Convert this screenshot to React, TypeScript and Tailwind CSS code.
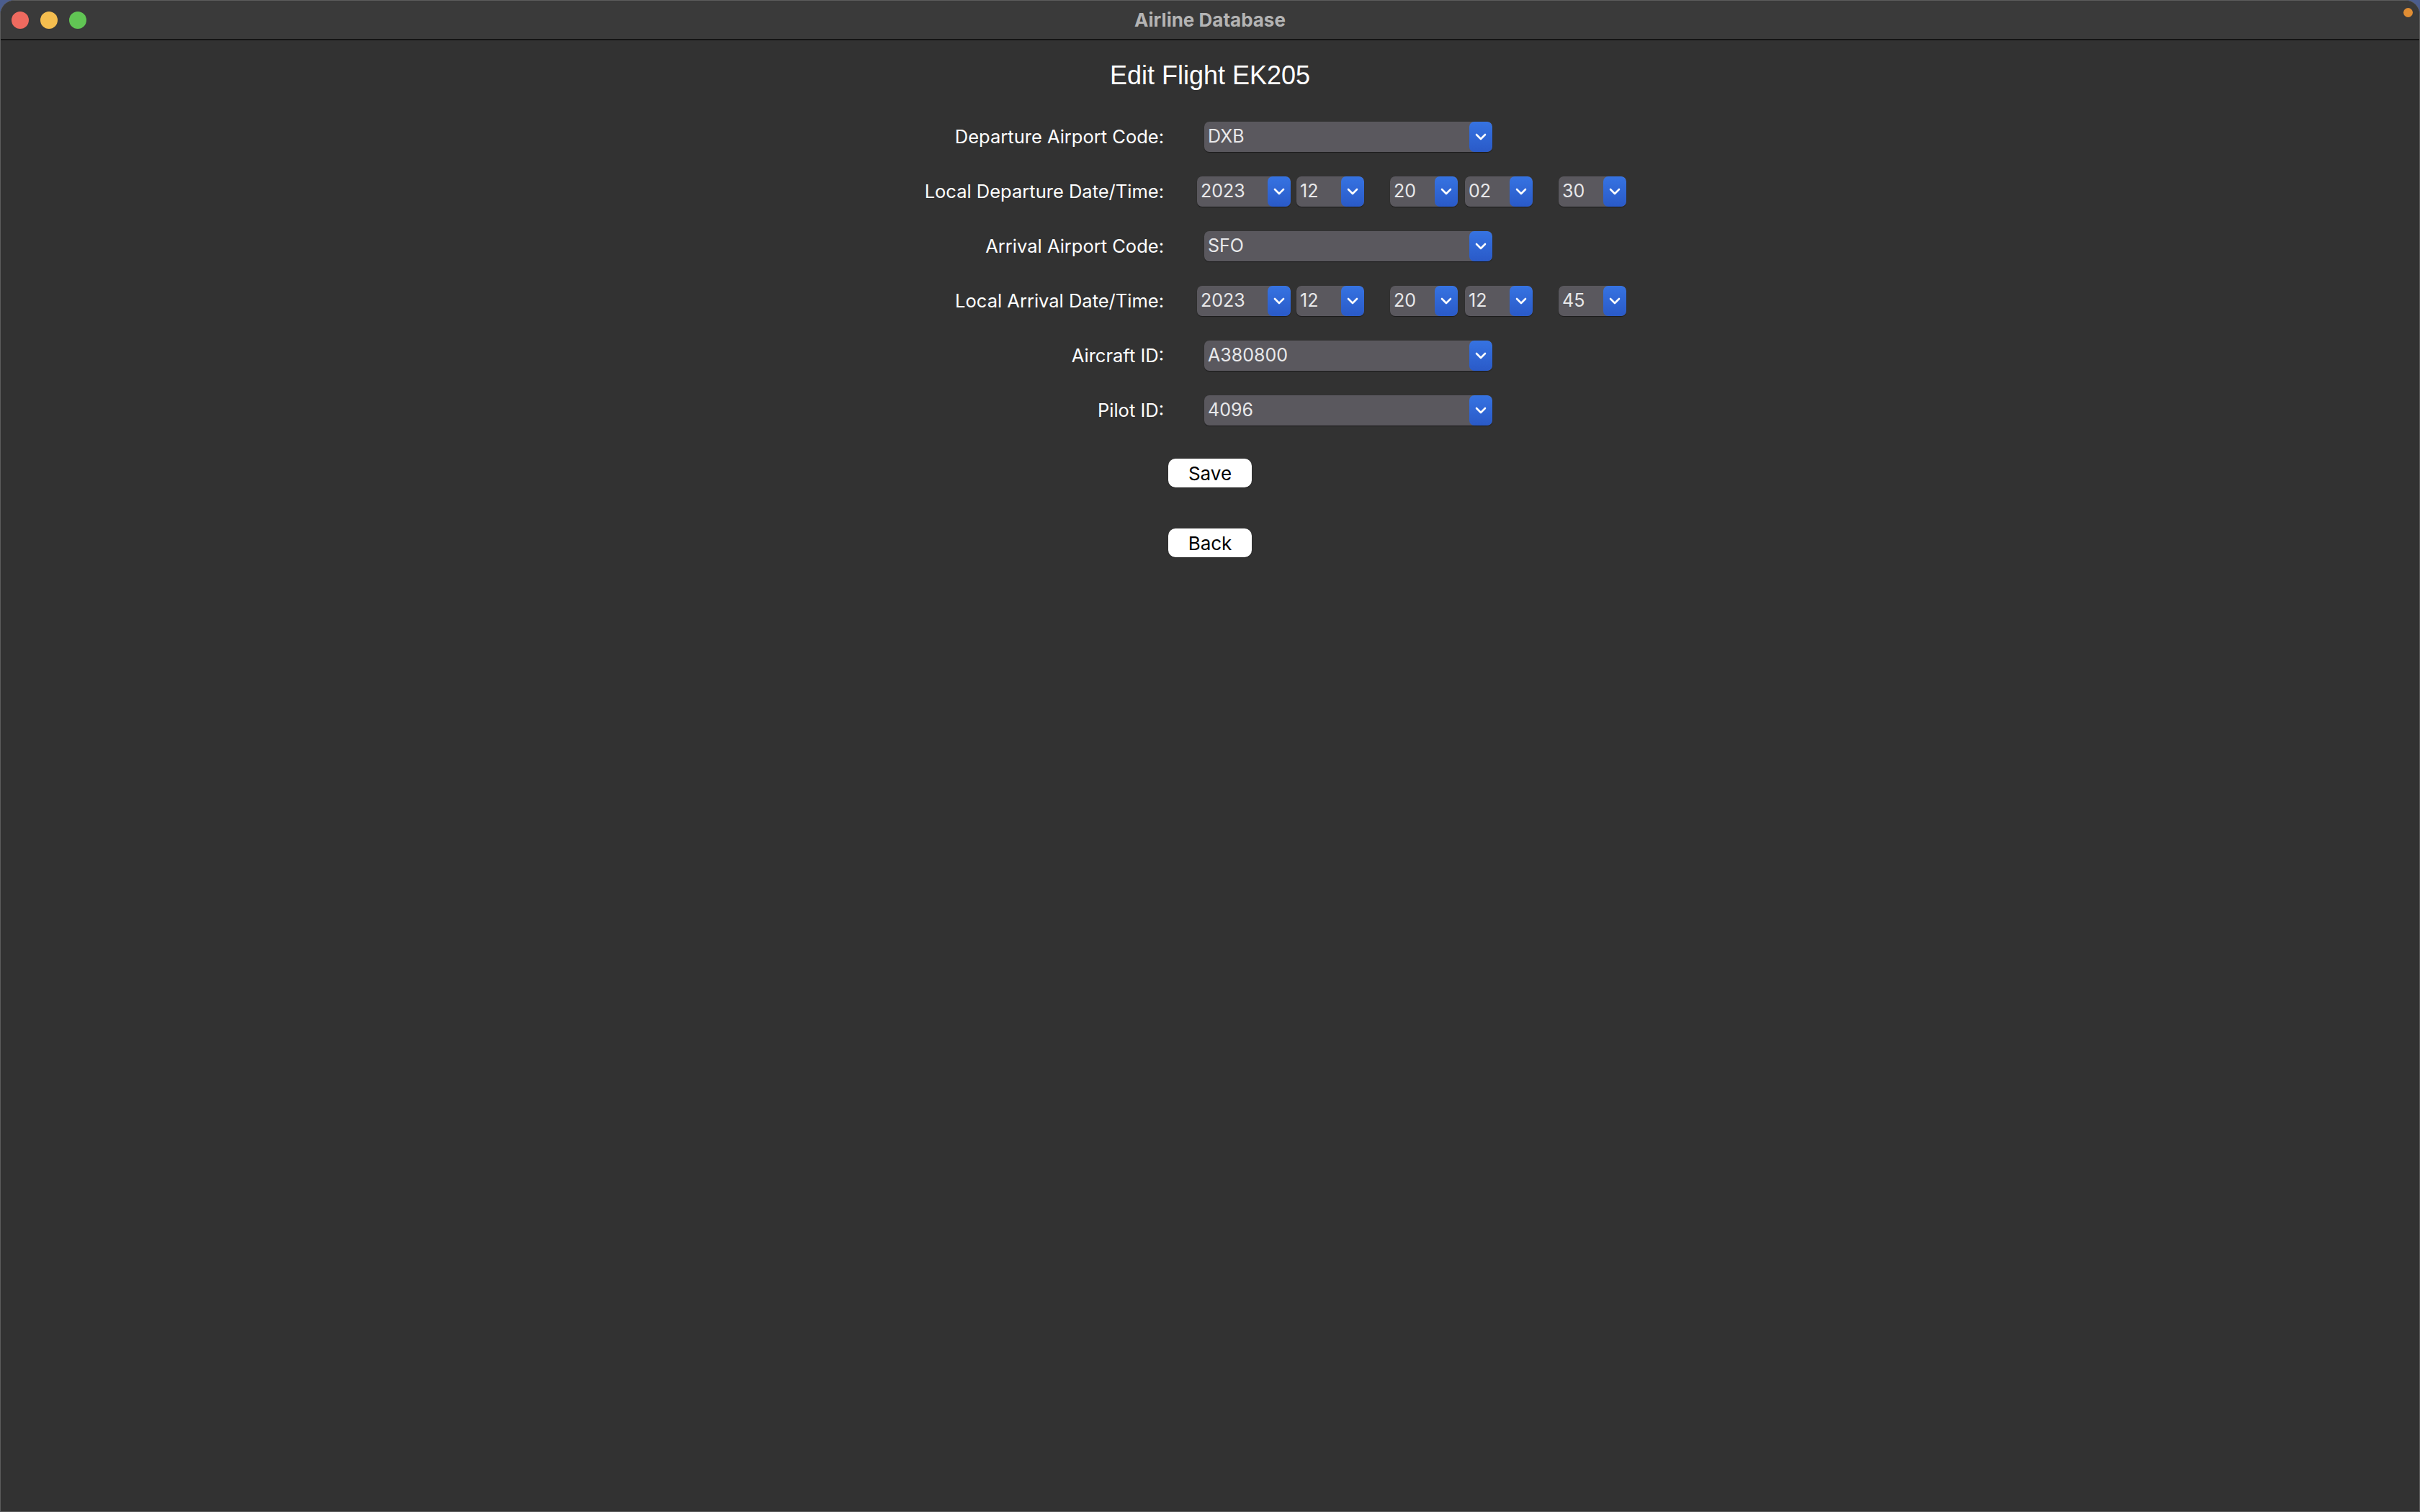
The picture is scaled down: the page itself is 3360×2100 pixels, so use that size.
import React, { useState } from "react"

type SelectProps = {
  value: string
  width: string
}

const Chevron = () => (
  <svg width="16" height="10" viewBox="0 0 16 10" fill="none">
    <polyline points="2,2 8,8 14,2" stroke="white" strokeWidth="2.6" strokeLinecap="round" strokeLinejoin="round" />
  </svg>
)

const PopupSelect = ({ value, width }: SelectProps) => {
  return (
    <div
      className={`${width} flex h-[42px] shrink-0 items-stretch overflow-hidden rounded-[7px] bg-[#5a585e] shadow-[0_1px_1px_rgba(0,0,0,0.45)]`}
    >
      <div className="flex flex-1 items-center pl-[5px] text-[25px] text-[#e8e8ea]">{value}</div>
      <div className="flex w-[32px] items-center justify-center rounded-[7px] bg-gradient-to-b from-[#3673e2] to-[#2a5ac8]">
        <Chevron />
      </div>
    </div>
  )
}

const DateTimeRow = ({ parts }: { parts: string[] }) => {
  return (
    <div className="ml-[46px] flex items-center">
      <PopupSelect value={parts[0]} width="w-[130px]" />
      <div className="ml-[8px]">
        <PopupSelect value={parts[1]} width="w-[94px]" />
      </div>
      <div className="ml-[36px]">
        <PopupSelect value={parts[2]} width="w-[94px]" />
      </div>
      <div className="ml-[10px]">
        <PopupSelect value={parts[3]} width="w-[94px]" />
      </div>
      <div className="ml-[36px]">
        <PopupSelect value={parts[4]} width="w-[94px]" />
      </div>
    </div>
  )
}

const Row = ({ label, children }: { label: string; children: React.ReactNode }) => (
  <div className="flex h-[42px] items-center">
    <div className="w-[516px] shrink-0 text-right text-[25.5px] text-white">{label}</div>
    {children}
  </div>
)

const EditFlight = () => {
  const [flight] = useState({
    code: "EK205",
    departure: "DXB",
    departureTime: ["2023", "12", "20", "02", "30"],
    arrival: "SFO",
    arrivalTime: ["2023", "12", "20", "12", "45"],
    aircraft: "A380800",
    pilot: "4096",
  })

  return (
    <div className="flex flex-col items-center pt-[29px]">
      <h1 className="text-[36px] leading-[40px] text-white [font-family:'Liberation_Sans',Arial,sans-serif]">
        Edit Flight {flight.code}
      </h1>
      <div className="mt-[44px] flex w-[1160px] flex-col gap-y-[34px]">
        <Row label="Departure Airport Code:">
          <div className="ml-[56px]">
            <PopupSelect value={flight.departure} width="w-[400px]" />
          </div>
        </Row>
        <Row label="Local Departure Date/Time:">
          <DateTimeRow parts={flight.departureTime} />
        </Row>
        <Row label="Arrival Airport Code:">
          <div className="ml-[56px]">
            <PopupSelect value={flight.arrival} width="w-[400px]" />
          </div>
        </Row>
        <Row label="Local Arrival Date/Time:">
          <DateTimeRow parts={flight.arrivalTime} />
        </Row>
        <Row label="Aircraft ID:">
          <div className="ml-[56px]">
            <PopupSelect value={flight.aircraft} width="w-[400px]" />
          </div>
        </Row>
        <Row label="Pilot ID:">
          <div className="ml-[56px]">
            <PopupSelect value={flight.pilot} width="w-[400px]" />
          </div>
        </Row>
      </div>
      <button className="mt-[46px] flex h-[40px] w-[116px] items-center justify-center rounded-[10px] bg-white text-[26px] text-black shadow-[0_1px_1px_rgba(0,0,0,0.4)]">
        Save
      </button>
      <button className="mt-[57px] flex h-[40px] w-[116px] items-center justify-center rounded-[10px] bg-white text-[26px] text-black shadow-[0_1px_1px_rgba(0,0,0,0.4)]">
        Back
      </button>
    </div>
  )
}

export default function App() {
  return (
    <div className="h-[2100px] w-[3360px] overflow-hidden bg-[#4b5d8e] [font-family:Inter,'Noto_Sans',sans-serif]">
      <div className="flex h-full flex-col overflow-hidden rounded-t-[20px] border border-[#5c5c5c] bg-[#323232]">
        <div className="relative flex h-[55px] shrink-0 items-center border-b-2 border-[#141414] bg-[#3a3a3a]">
          <div className="flex items-center gap-[16px] pl-[15px]">
            <span className="h-[24px] w-[24px] rounded-full bg-[#ee6a5f]" />
            <span className="h-[24px] w-[24px] rounded-full bg-[#f5be4f]" />
            <span className="h-[24px] w-[24px] rounded-full bg-[#61c554]" />
          </div>
          <div className="absolute inset-0 flex items-center justify-center text-[26px] font-bold text-[#b4b4b4]">
            Airline Database
          </div>
          <span className="absolute right-[9px] top-[10px] h-[13px] w-[13px] rounded-full bg-[#e08d33]" />
        </div>
        <EditFlight />
      </div>
    </div>
  )
}
